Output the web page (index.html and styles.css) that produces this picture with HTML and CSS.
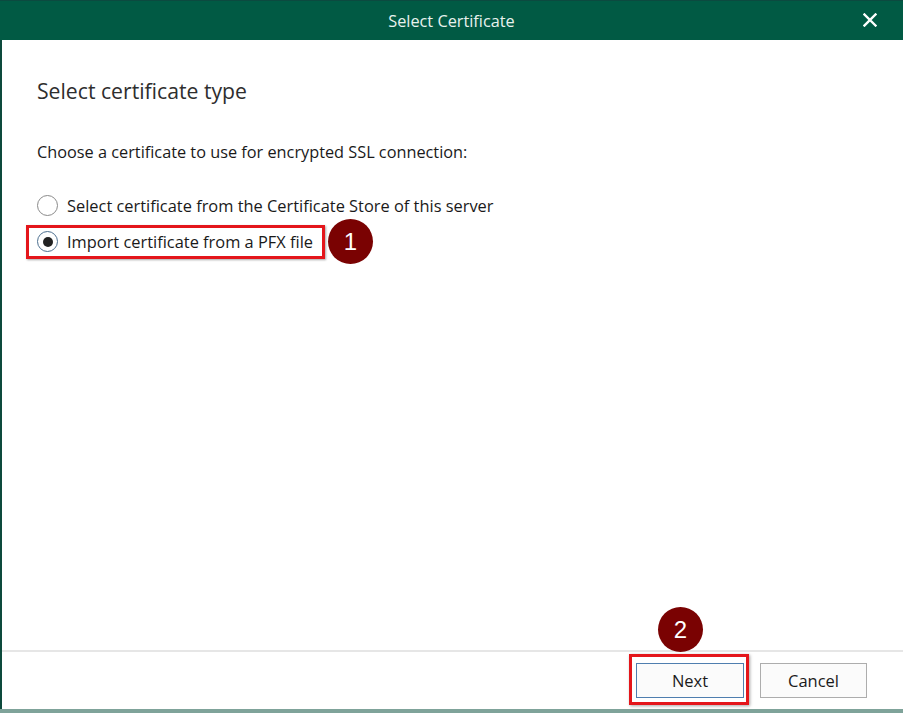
FILE: index.html
```html
<!DOCTYPE html>
<html>
<head>
<meta charset="utf-8">
<link rel="stylesheet" href="styles.css">
</head>
<body>
<div class="dialog">
  <div class="titlebar">
    <span class="title">Select Certificate</span>
    <svg class="close" width="14" height="14" viewBox="0 0 14 14"><path d="M1.5 1.5 L12.5 12.5 M12.5 1.5 L1.5 12.5" stroke="#fff" stroke-width="2.4" stroke-linecap="square"/></svg>
  </div>
  <div class="main">
    <h1 class="heading">Select certificate type</h1>
    <p class="prompt">Choose a certificate to use for encrypted SSL connection:</p>
    <div class="options">
      <label class="option"><span class="radio"></span><span>Select certificate from the Certificate Store of this server</span></label>
      <div class="option-wrap">
        <label class="option highlight"><span class="radio checked"></span><span>Import certificate from a PFX file</span></label>
        <span class="badge badge-1">1</span>
      </div>
    </div>
  </div>
  <div class="footer">
    <div class="next-wrap">
      <span class="badge badge-2">2</span>
      <button class="btn btn-default">Next</button>
    </div>
    <button class="btn">Cancel</button>
  </div>
  <div class="bottom-strip"></div>
</div>
</body>
</html>
```
FILE: styles.css
```css
* { box-sizing: border-box; }
html, body { margin: 0; padding: 0; background: #fff; }
body { width: 903px; height: 713px; overflow: hidden; font-family: "Open Sans", "Noto Sans", sans-serif; color: #1a1a1a; }
.dialog { width: 903px; height: 713px; display: flex; flex-direction: column; border-left: 2px solid #0d4a3c; }
.titlebar { height: 40px; background: #015a44; border-top: 1px solid #0c4a40; display: flex; align-items: center; justify-content: center; position: relative; margin-left: -2px; }
.title { color: #e8f2ee; font-size: 16.3px; }
.close { position: absolute; right: 26px; top: 12px; }
.main { flex: 1; padding-left: 35px; padding-top: 36px; }
.heading { margin: 0; font-weight: normal; font-size: 21.2px; line-height: 30px; color: #2e2e2e; }
.prompt { margin: 35px 0 0; font-size: 16.3px; line-height: 22px; color: #1a1a1a; }
.options { margin-top: 30px; display: flex; flex-direction: column; }
.option { display: flex; align-items: center; gap: 9px; font-size: 16.4px; height: 24px; color: #1a1a1a; }
.option-wrap { display: flex; align-items: center; margin-top: 2px; margin-left: -11px; }
.highlight { border: 3px solid #e4161b; padding: 0 9px 0 8px; height: 34px; box-shadow: 1px 1px 2px rgba(0,0,0,0.35); }
.radio { width: 21px; height: 21px; border-radius: 50%; border: 1px solid #8a8a8a; background: #fff; display: inline-flex; align-items: center; justify-content: center; flex: none; }
.radio.checked { border: 1.5px solid #4d6f8f; }
.radio.checked::after { content: ""; width: 10px; height: 10px; border-radius: 50%; background: #222; }
.badge { width: 45px; height: 45px; border-radius: 50%; background: #7a0202; color: #fff; font-size: 24px; display: inline-flex; align-items: center; justify-content: center; font-family: "Liberation Sans", Arial, sans-serif; }
.badge-1 { margin-left: 3px; }
.footer { height: 59px; border-top: 2px solid #e6e6e6; display: flex; align-items: flex-start; justify-content: flex-end; padding-right: 36px; padding-top: 2px; }
.next-wrap { position: relative; border: 3px solid #e4161b; padding: 6px 2px 4px 4px; margin-right: 11px; box-shadow: 1px 1px 3px rgba(0,0,0,0.35); }
.badge-2 { position: absolute; left: 26px; top: -50px; }
.btn { width: 107px; height: 35px; background: #fbfbfb; border: 1px solid #adadad; font-family: "Open Sans", "Noto Sans", sans-serif; font-size: 16.5px; color: #1a1a1a; padding: 0; margin-top: 9px; }
.next-wrap .btn { margin-top: 0; width: 108px; border: 1.5px solid #4f7eaf; }
.bottom-strip { height: 4px; background: #7fa39a; margin-left: -2px; }
```
